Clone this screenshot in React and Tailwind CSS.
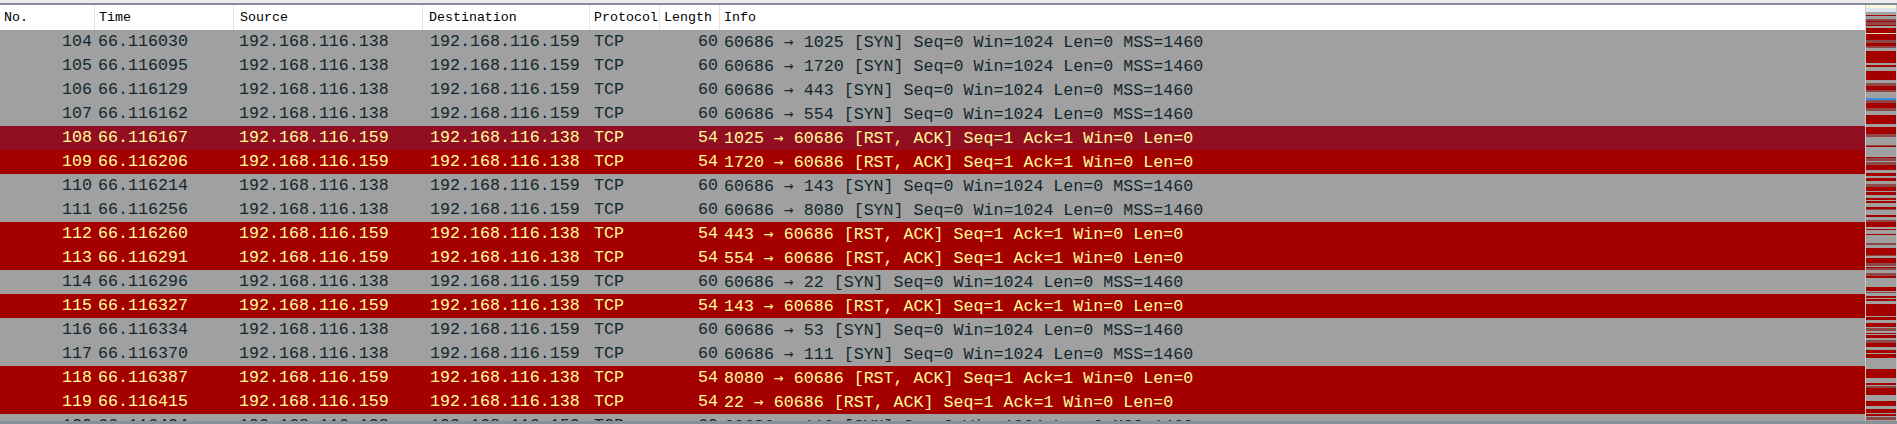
const rows = [
  [104, "66.116030", "syn", "1025"],
  [105, "66.116095", "syn", "1720"],
  [106, "66.116129", "syn", "443"],
  [107, "66.116162", "syn", "554"],
  [108, "66.116167", "rst", "1025", true],
  [109, "66.116206", "rst", "1720"],
  [110, "66.116214", "syn", "143"],
  [111, "66.116256", "syn", "8080"],
  [112, "66.116260", "rst", "443"],
  [113, "66.116291", "rst", "554"],
  [114, "66.116296", "syn", "22"],
  [115, "66.116327", "rst", "143"],
  [116, "66.116334", "syn", "53"],
  [117, "66.116370", "syn", "111"],
  [118, "66.116387", "rst", "8080"],
  [119, "66.116415", "rst", "22"],
  [120, "66.116424", "syn", "113"],
];

const cols = "grid grid-cols-[95px_139px_189px_167px_70px_60px_1fr]";

// pseudo random stripes for the packet map on the right
function mulberry32(a) {
  return function () {
    a |= 0;
    a = (a + 0x6d2b79f5) | 0;
    let t = Math.imul(a ^ (a >>> 15), 1 | a);
    t = (t + Math.imul(t ^ (t >>> 7), 61 | t)) ^ t;
    return ((t ^ (t >>> 14)) >>> 0) / 4294967296;
  };
}

function buildStripes() {
  const rnd = mulberry32(7);
  const out = [];
  let y = 10;
  while (y < 414) {
    const r = rnd();
    let h = 1 + Math.floor(rnd() * 3);
    let fill = "#a0a0a0";
    if (r < 0.5) fill = "#a40000";
    else if (r < 0.6) fill = "#8e4848";
    else if (r < 0.66) {
      fill = "#a40000";
      h = 4 + Math.floor(rnd() * 6);
    }
    out.push({ y, h, fill });
    y += h;
  }
  return out;
}

const stripes = buildStripes();

function PacketMap() {
  return (
    <svg width="30" height="416" viewBox="0 0 30 416" className="block">
      <rect x="0" y="0" width="30" height="416" fill="#a0a0a0" />
      {stripes.map((s, i) => (
        <rect key={i} x="0" y={s.y} width="30" height={s.h} fill={s.fill} />
      ))}
      <rect x="0" y="0" width="30" height="3" fill="#fdf6dc" />
      <rect x="0" y="3" width="30" height="4" fill="#dce4ec" />
      <rect x="0" y="28" width="30" height="1" fill="#e8e0b0" />
      <rect x="0" y="93" width="30" height="2" fill="#3c8fe0" />
    </svg>
  );
}

function Arrow() {
  return <span className="font-['DejaVu_Sans_Mono',monospace] text-[16.3px]">→</span>;
}

function Row({ no, time, kind, port, hover }) {
  const syn = kind === "syn";
  const bg = syn ? "bg-[#a0a0a0] text-[#12272e]" : hover ? "bg-[#910f20] text-[#fffc9c]" : "bg-[#a40000] text-[#fffc9c]";
  const src = syn ? "192.168.116.138" : "192.168.116.159";
  const dst = syn ? "192.168.116.159" : "192.168.116.138";
  return (
    <div className={`${cols} ${bg} h-[24px] shrink-0 leading-[24px] whitespace-pre`}>
      <div className="pr-[3px] text-right">{no}</div>
      <div className="pl-[3px]">{time}</div>
      <div className="pl-[5px]">{src}</div>
      <div className="pl-[7px]">{dst}</div>
      <div className="pl-[4px]">TCP</div>
      <div className="pr-[2px] text-right">{syn ? 60 : 54}</div>
      <div className="pl-[4px]">
        {syn ? (
          <>
            {"60686 "}
            <Arrow />
            {` ${port} [SYN] Seq=0 Win=1024 Len=0 MSS=1460`}
          </>
        ) : (
          <>
            {`${port} `}
            <Arrow />
            {" 60686 [RST, ACK] Seq=1 Ack=1 Win=0 Len=0"}
          </>
        )}
      </div>
    </div>
  );
}

export default function App() {
  return (
    <div className="flex h-[424px] w-[1897px] flex-col overflow-hidden bg-[#a0a0a0]">
      <div className="h-[3px] shrink-0 bg-[#ececec]" />
      <div className="h-[2px] shrink-0 bg-[#848c95]" />
      <div className="flex min-h-0 flex-1">
        <div className="flex min-w-0 flex-1 flex-col overflow-hidden font-['Liberation_Mono',monospace] text-[16.65px]">
          <div className={`${cols} h-[25px] shrink-0 bg-white text-[13.3px] leading-[25px] text-black`}>
            {["No.", "Time", "Source", "Destination", "Protocol", "Length", "Info"].map((h, i) => (
              <div key={h} className={`overflow-hidden whitespace-nowrap pl-[4px] ${i < 6 ? "border-r border-[#e5e5e5]" : ""} ${i === 2 || i === 3 ? "pl-[6px]" : ""}`}>
                {h}
              </div>
            ))}
          </div>
          {rows.map(([no, time, kind, port, hover]) => (
            <Row key={no} no={no} time={time} kind={kind} port={port} hover={hover} />
          ))}
        </div>
        <div className="w-[32px] shrink-0 border-x border-[#c9c9c9]">
          <PacketMap />
        </div>
      </div>
      <div className="h-[3px] shrink-0 bg-[#8a9099]" />
    </div>
  );
}
